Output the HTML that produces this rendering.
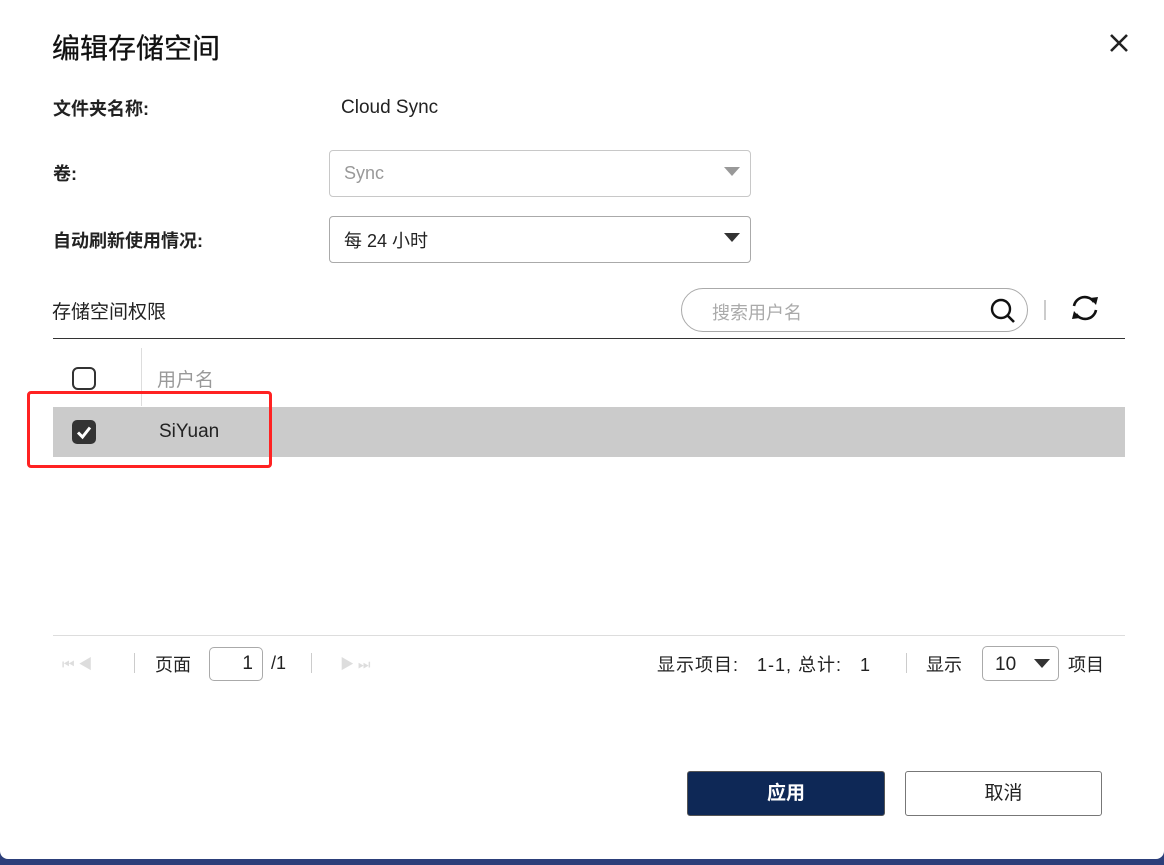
<!DOCTYPE html>
<html><head><meta charset="utf-8"><style>
*{box-sizing:border-box;margin:0;padding:0}
body{width:1164px;height:865px;background:#2c3f7a;position:relative;overflow:hidden;font-family:"Liberation Sans","Noto Sans CJK SC",sans-serif;color:#222}
.dlg{position:absolute;left:0;top:0;width:1164px;height:859px;background:#fff;border-radius:0 0 8px 8px}
.a{position:absolute;white-space:nowrap}
.lbl{font-size:18px;font-weight:bold;color:#222}
.sel{position:absolute;border:1px solid #c8c8c8;border-radius:4px;font-size:18px;padding-left:14px;display:flex;align-items:center}
.tri{position:absolute;width:0;height:0;border-left:8px solid transparent;border-right:8px solid transparent;border-top:9px solid #333}
</style></head><body>
<div class="dlg">
<div class="a" style="left:52px;top:27px;font-size:28px;color:#111;-webkit-text-stroke:0.3px #111">编辑存储空间</div>
<svg class="a" style="left:1108px;top:32px" width="22" height="22" viewBox="0 0 22 22"><path d="M3 3L19 19M19 3L3 19" stroke="#222" stroke-width="2.6"/></svg>
<div class="a lbl" style="left:53px;top:95px">文件夹名称:</div>
<div class="a" style="left:341px;top:97px;font-size:19px">Cloud Sync</div>
<div class="a lbl" style="left:53px;top:160px">卷:</div>
<div class="sel" style="left:329px;top:150px;width:422px;height:47px;color:#999">Sync<div class="tri" style="right:10px;top:16px;border-top-color:#999"></div></div>
<div class="a lbl" style="left:53px;top:227px">自动刷新使用情况:</div>
<div class="sel" style="left:329px;top:216px;width:422px;height:47px;color:#222;border-color:#aaa">每 24 小时<div class="tri" style="right:10px;top:16px"></div></div>
<div class="a" style="left:52px;top:297px;font-size:19px">存储空间权限</div>
<div class="a" style="left:681px;top:288px;width:347px;height:44px;border:1px solid #aaa;border-radius:22px"></div>
<div class="a" style="left:712px;top:299px;font-size:18px;color:#aaa">搜索用户名</div>
<svg class="a" style="left:988px;top:296px" width="30" height="30" viewBox="0 0 30 30"><circle cx="13" cy="13" r="9" fill="none" stroke="#111" stroke-width="2.4"/><path d="M19.5 19.5L26 26" stroke="#111" stroke-width="2.6"/></svg>
<div class="a" style="left:1044px;top:300px;width:2px;height:20px;background:#ccc"></div>
<svg class="a" style="left:1068px;top:292px" width="34" height="32" viewBox="0 0 34 32"><path d="M6 14A11 11 0 0 1 26 10" fill="none" stroke="#111" stroke-width="2.6"/><path d="M22 6L28 13L30 5Z" fill="#111"/><path d="M28 18A11 11 0 0 1 8 22" fill="none" stroke="#111" stroke-width="2.6"/><path d="M12 26L6 19L4 27Z" fill="#111"/></svg>
<div class="a" style="left:53px;top:338px;width:1072px;height:1px;background:#333"></div>
<div class="a" style="left:141px;top:348px;width:1px;height:58px;background:#ddd"></div>
<div class="a" style="left:72px;top:367px;width:24px;height:23px;border:2.5px solid #333;border-radius:6px"></div>
<div class="a" style="left:157px;top:365px;font-size:19px;color:#999">用户名</div>
<div class="a" style="left:53px;top:407px;width:1072px;height:50px;background:#cbcbcb"></div>
<div class="a" style="left:72px;top:420px;width:24px;height:24px;background:#333;border-radius:5px"></div>
<svg class="a" style="left:72px;top:420px" width="24" height="24" viewBox="0 0 24 24"><path d="M6 12.5L10.5 17L18 7.5" fill="none" stroke="#fff" stroke-width="3"/></svg>
<div class="a" style="left:159px;top:421px;font-size:19px">SiYuan</div>
<div class="a" style="left:27px;top:391px;width:245px;height:77px;border:3px solid #f22;border-radius:4px"></div>
<div class="a" style="left:53px;top:635px;width:1072px;height:1px;background:#ddd"></div>
<div class="a" style="left:62px;top:654px;font-size:14px;color:#ddd">⏮ ◀</div>
<div class="a" style="left:134px;top:653px;width:1px;height:20px;background:#ccc"></div>
<div class="a" style="left:155px;top:651px;font-size:18px">页面</div>
<div class="a" style="left:209px;top:647px;width:54px;height:34px;border:1px solid #aaa;border-radius:5px;font-size:19px;text-align:right;padding:5px 9px 0 0">1</div>
<div class="a" style="left:271px;top:653px;font-size:18px">/1</div>
<div class="a" style="left:311px;top:653px;width:1px;height:20px;background:#ccc"></div>
<div class="a" style="left:340px;top:654px;font-size:14px;color:#ddd">▶ ⏭</div>
<div class="a" style="left:657px;top:651px;font-size:18px;letter-spacing:1px">显示项目: &nbsp;&nbsp;1-1, 总计: &nbsp;&nbsp;1</div>
<div class="a" style="left:906px;top:653px;width:1px;height:20px;background:#ccc"></div>
<div class="a" style="left:926px;top:651px;font-size:18px">显示</div>
<div class="a" style="left:982px;top:646px;width:77px;height:35px;border:1px solid #aaa;border-radius:5px;font-size:19px;padding:7px 0 0 12px">10<div class="tri" style="right:8px;top:12px"></div></div>
<div class="a" style="left:1068px;top:651px;font-size:18px">项目</div>
<div class="a" style="left:687px;top:771px;width:198px;height:45px;background:#0e2856;border:1px solid #555;border-radius:3px;color:#fff;font-size:19px;font-weight:bold;text-align:center;line-height:43px">应用</div>
<div class="a" style="left:905px;top:771px;width:197px;height:45px;background:#fff;border:1px solid #777;border-radius:3px;font-size:19px;text-align:center;line-height:43px">取消</div>
</div>
</body></html>
